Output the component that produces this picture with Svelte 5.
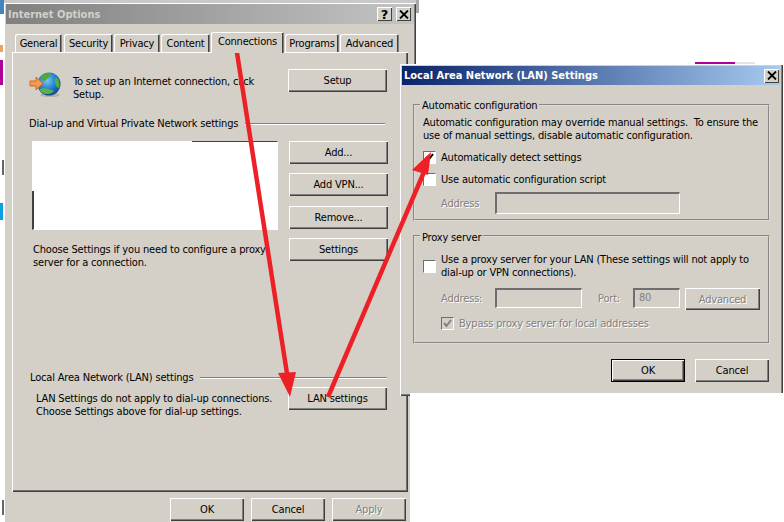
<script>
  const tabs = [
    { label: 'General', w: 47, gap: 2 },
    { label: 'Security', w: 49, gap: 1 },
    { label: 'Privacy', w: 46, gap: 1 },
    { label: 'Content', w: 49, gap: 1 },
    { label: 'Connections', w: 73, gap: 1, sel: true },
    { label: 'Programs', w: 54, gap: 1 },
    { label: 'Advanced', w: 59, gap: 0 }
  ];
</script>

<div class="page">
  <div class="bg-top"></div>
  <div class="bg-corner"></div>
  <div class="strip">
    <i class="s1"></i><i class="s2"></i><i class="s3"></i><i class="s4"></i><i class="s5"></i><i class="s6"></i>
  </div>
  <div class="bg-band"></div>

  <section class="win main">
    <header class="title inactive">
      <span>Internet Options</span>
      <div class="caps">
        <button class="cap q">?</button>
        <button class="cap"><svg width="10" height="9" viewBox="0 0 10 9"><path d="M1 0.5 L9 8.5 M9 0.5 L1 8.5" stroke="#000" stroke-width="1.8" fill="none"/></svg></button>
      </div>
    </header>

    <nav class="tabs">
      {#each tabs as t}
        <div class="tab" class:sel={t.sel} style:width="{t.w}px" style:margin-right="{t.gap}px">{t.label}</div>
      {/each}
    </nav>

    <div class="panel">
      <div class="setup">
        <svg class="globe" width="33" height="26" viewBox="0 0 33 26">
          <defs>
            <radialGradient id="g" cx="0.42" cy="0.35" r="0.7">
              <stop offset="0" stop-color="#7cc4f0"/>
              <stop offset="0.55" stop-color="#1f7fce"/>
              <stop offset="1" stop-color="#123f86"/>
            </radialGradient>
          </defs>
          <ellipse cx="21" cy="23" rx="10" ry="2" fill="#b5b2aa"/>
          <circle cx="20" cy="12" r="11.5" fill="url(#g)"/>
          <path d="M13 3 C16 1 20 1 22 2 C22 5 18 6 16 9 C13 9 12 6 13 3Z" fill="#4fa83a"/>
          <path d="M27 5 C30 7 31 12 30 16 C28 16 26 13 26 10 C26 8 26 6 27 5Z" fill="#58ad3f"/>
          <path d="M11 17 C15 15 20 17 25 19 C23 22 17 23 14 21 C12 20 11 19 11 17Z" fill="#5cb344"/>
          <path d="M1 9 L7 9 L7 5 L14 11.5 L7 18 L7 14 L1 14 Z" fill="#f59a4a" stroke="#d2691e" stroke-width="1"/>
        </svg>
        <p class="setup-text">To set up an Internet connection, click<br />Setup.</p>
        <button class="btn">Setup</button>
      </div>

      <div class="legend dial"><span>Dial-up and Virtual Private Network settings</span><i></i></div>

      <div class="vpn">
        <div class="vpn-left">
          <div class="list"><b class="cover"></b></div>
          <p class="note">Choose Settings if you need to configure a proxy<br />server for a connection.</p>
        </div>
        <div class="vpn-btns">
          <button class="btn">Add...</button>
          <button class="btn">Add VPN...</button>
          <button class="btn rem">Remove...</button>
          <button class="btn">Settings</button>
        </div>
      </div>

      <div class="legend lan"><span>Local Area Network (LAN) settings</span><i></i></div>
      <div class="lanrow">
        <p>LAN Settings do not apply to dial-up connections.<br />Choose Settings above for dial-up settings.</p>
        <button class="btn">LAN settings</button>
      </div>
    </div>

    <footer class="foot">
      <button class="btn wide">OK</button>
      <button class="btn wide">Cancel</button>
      <button class="btn wide off">Apply</button>
    </footer>
  </section>

  <section class="win lanwin">
    <header class="title active">
      <span>Local Area Network (LAN) Settings</span>
      <button class="cap"><svg width="10" height="9" viewBox="0 0 10 9"><path d="M1 0.5 L9 8.5 M9 0.5 L1 8.5" stroke="#000" stroke-width="1.8" fill="none"/></svg></button>
    </header>

    <fieldset class="grp auto">
      <legend>Automatic configuration</legend>
      <p class="desc">Automatic configuration may override manual settings.&nbsp; To ensure the<br />use of manual settings, disable automatic configuration.</p>
      <div class="chk c1">
        <span class="box"><svg width="11" height="11" viewBox="0 0 11 11"><path d="M2 5 L4.5 8 L9 2" stroke="#000" stroke-width="2" fill="none"/></svg></span>
        <label>Automatically detect settings</label>
      </div>
      <div class="chk c2"><span class="box"></span><label>Use automatic configuration script</label></div>
      <div class="addr">
        <span class="off">Address</span>
        <span class="field f-long"></span>
      </div>
    </fieldset>

    <fieldset class="grp proxy">
      <legend>Proxy server</legend>
      <div class="chk c3">
        <span class="box"></span>
        <label>Use a proxy server for your LAN (These settings will not apply to<br />dial-up or VPN connections).</label>
      </div>
      <div class="addr a2">
        <span class="off">Address:</span>
        <span class="field f-mid"></span>
        <span class="off port">Port:</span>
        <span class="field f-port">80</span>
        <button class="btn adv off">Advanced</button>
      </div>
      <div class="chk c4">
        <span class="box dis"><svg width="11" height="11" viewBox="0 0 11 11"><path d="M2 5 L4.5 8 L9 2" stroke="#808080" stroke-width="2" fill="none"/></svg></span>
        <label class="off">Bypass proxy server for local addresses</label>
      </div>
    </fieldset>

    <footer class="foot2">
      <button class="btn wide def">OK</button>
      <button class="btn wide">Cancel</button>
    </footer>
  </section>

  <div class="mask"></div>

  <svg class="arrows" width="784" height="522" viewBox="0 0 784 522">
    <path d="M235 40 L288 380" stroke="#ee2027" stroke-width="4.5" fill="none"/>
    <path d="M278 373 L296 372 L290 397 Z" fill="#ee2027"/>
    <path d="M328 397 L424 172" stroke="#ee2027" stroke-width="4.5" fill="none"/>
    <path d="M431 152 L412 170 L428 175 Z" fill="#ee2027"/>
  </svg>
</div>

<style>
  :global(body) { margin: 0; background: #fff; }
  .page {
    position: relative;
    width: 784px;
    height: 522px;
    overflow: hidden;
    background: #fff;
    font: 11px/13px "DejaVu Sans Condensed", "DejaVu Sans", sans-serif;
    font-stretch: condensed;
    letter-spacing: -0.18px;
    color: #000;
  }
  p { margin: 0; }
  button { font: inherit; font-stretch: inherit; letter-spacing: inherit; color: inherit; padding: 0; border: 0; }

  .bg-top { position: absolute; left: 0; top: 0; width: 416px; height: 4px; background: linear-gradient(90deg, #6d93b0 0 4px, #c9c9c9 4px); }
  .bg-corner { position: absolute; left: 416px; top: 0; width: 3px; height: 13px; background: #a8a8a8; }
  .bg-band { position: absolute; left: 695px; top: 62px; width: 60px; height: 2px; background: linear-gradient(90deg, #b0009a 0 40px, #e4e4e4 40px); }
  .strip { position: absolute; left: 0; top: 0; width: 4px; height: 522px; display: flex; flex-direction: column; }
  .strip i { display: block; }
  .s1 { height: 14px; background: #3f86c0; }
  .s2 { margin-top: 31px; background: #f2a060; width: 3px; height: 7px; }
  .s3 { margin-top: 8px; height: 25px; background: #b0009a; width: 3px; }
  .s4 { margin-top: 75px; height: 15px; width: 2px; margin-left: 2px; background: #666; }
  .s5 { margin-top: 28px; height: 17px; background: #0c9fe0; width: 3px; }
  .s6 { margin-top: 280px; height: 15px; width: 2px; margin-left: 2px; background: #666; }

  .win {
    position: absolute;
    box-sizing: border-box;
    background: #d4d0c8;
    box-shadow: inset 1px 1px #fff, inset -1px -1px #404040, inset -2px -2px #808080;
    display: flex;
    flex-direction: column;
  }
  .main { left: 4px; top: 3px; width: 412px; height: 540px; padding: 1px 2px 0; }
  .lanwin { left: 400px; top: 64px; width: 383px; height: 332px; padding: 2px 3px 0 2px; }

  .title {
    flex: none;
    display: flex;
    align-items: center;
    justify-content: space-between;
    font-weight: 700;
    letter-spacing: 0;
    white-space: nowrap;
    box-sizing: border-box;
  }
  .inactive {
    height: 20px;
    padding: 0 3px 0 2px;
    color: #d4d0c8;
    background: linear-gradient(90deg, #808080, #c4c4c4);
  }
  .active {
    height: 19px;
    padding: 0 1px 0 2px;
    color: #fff;
    background: linear-gradient(90deg, #0a246a, #a6caf0);
  }
  .caps { display: flex; gap: 4px; }
  .cap {
    width: 15px;
    height: 14px;
    display: flex;
    align-items: center;
    justify-content: center;
    color: #000;
    background: #d4d0c8;
    box-shadow: inset 1px 1px #fff, inset -1px -1px #404040;
    font-weight: 700;
    font-size: 13px;
  }
  .cap.q { font-family: "DejaVu Sans", sans-serif; font-stretch: normal; }

  .tabs { flex: none; display: flex; align-items: flex-end; height: 28px; margin-left: 9px; }
  .tab {
    box-sizing: border-box;
    height: 18px;
    text-align: center;
    line-height: 19px;
    white-space: nowrap;
    box-shadow: inset 1px 1px #fff, inset -1px 0 #808080, inset -2px 0 #404040;
    border-radius: 2px 2px 0 0;
  }
  .tab.sel {
    height: 21px;
    margin-bottom: -1px;
    line-height: 20px;
    position: relative;
    z-index: 1;
    background: #d4d0c8;
  }

  .panel {
    flex: none;
    box-sizing: border-box;
    width: 396px;
    height: 440px;
    margin-left: 6px;
    padding: 17px 21px 0 17px;
    box-shadow: inset 1px 1px #fff, inset -1px -1px #404040, inset -2px -2px #707070;
  }

  .btn {
    display: block;
    box-sizing: border-box;
    width: 99px;
    height: 23px;
    background: #d4d0c8;
    text-align: center;
    box-shadow: inset 1px 1px #fff, inset -1px -1px #404040, inset -2px -2px #808080;
    white-space: nowrap;
  }
  .wide { width: 74px; }
  .off { color: #808080; text-shadow: 1px 1px #fff; }

  .setup { display: flex; align-items: flex-start; height: 26px; }
  .globe { flex: none; margin-top: 3px; }
  .setup-text { width: 215px; margin: 6px 0 0 11px; white-space: nowrap; }
  .setup .btn { margin-left: auto; }

  .legend { display: flex; align-items: center; height: 13px; white-space: nowrap; }
  .legend i { flex: 1; height: 2px; background: linear-gradient(#808080 50%, #fff 50%); margin-left: 7px; }
  .dial { margin-top: 22px; margin-right: 2px; }

  .vpn { display: flex; margin-top: 11px; justify-content: space-between; height: 120px; margin-right: -1px; }
  .vpn-left { margin-left: 3px; width: 246px; }
  .list {
    position: relative;
    box-sizing: border-box;
    width: 246px;
    height: 89px;
    background: #fff;
    border: 1px solid;
    border-color: #404040 #fff #fff #404040;
    border-left-width: 2px;
  }
  .cover { position: absolute; left: -2px; top: -1px; width: 160px; height: 50px; background: #fff; }
  .note { margin-top: 13px; width: 246px; padding-left: 1px; white-space: nowrap; }
  .vpn-btns { display: flex; flex-direction: column; gap: 9px; }
  .rem { margin-top: 1px; }

  .lan { margin-top: 110px; margin-left: 1px; }
  .lanrow { display: flex; justify-content: space-between; margin-top: 3px; }
  .lanrow p { margin: 5px 0 0 7px; white-space: nowrap; }

  .foot { display: flex; gap: 7px; margin: 6px 0 0 164px; }

  .grp {
    box-sizing: border-box;
    margin: 0 0 0 11px;
    width: 357px;
    padding: 0 0 0 8px;
    border: 2px groove #dedbd4;
    min-width: 0;
  }
  .grp legend { padding: 0 2px; margin-left: -3px; line-height: 13px; white-space: nowrap; position: relative; top: 1px; }
  .proxy legend { top: 2px; }
  .auto { height: 123px; margin-top: 13px; }
  .proxy { height: 115px; margin-top: 8px; }

  .desc { margin-top: 5px; white-space: nowrap; }
  .chk { display: flex; align-items: flex-start; }
  .box {
    flex: none;
    box-sizing: border-box;
    width: 13px;
    height: 13px;
    background: #fff;
    border: 1px solid;
    border-color: #6e6e6e #fff #fff #6e6e6e;
    display: flex;
    align-items: center;
    justify-content: center;
    overflow: hidden;
  }
  .box.dis { background: #d4d0c8; }
  .chk label { margin-left: 5px; white-space: nowrap; }
  .c1 { margin-top: 9px; }
  .c2 { margin-top: 9px; }
  .c3 { margin-top: 11px; align-items: center; }
  .c4 { margin: 7px 0 0 18px; }
  .addr { display: flex; align-items: center; margin: 6px 0 0 18px; }
  .addr > span:first-child { width: 54px; flex: none; }
  .field {
    display: block;
    box-sizing: border-box;
    height: 22px;
    border: 1px solid;
    border-color: #6e6e6e #fff #fff #6e6e6e;
    border-width: 2px 1px 1px 2px;
  }
  .f-long { width: 185px; }
  .a2 { margin-top: 7px; }
  .a2 .field { height: 20px; }
  .f-mid { width: 87px; }
  .port { margin-left: 16px; width: 35px; }
  .f-port { width: 47px; color: #808080; padding-left: 4px; line-height: 16px; }
  .adv { width: 75px; height: 22px; margin-left: 5px; margin-top: 2px; }

  .foot2 { display: flex; gap: 10px; margin: 15px 0 0 209px; }
  .def { outline: 1px solid #000; outline-offset: -1px; box-shadow: inset 2px 2px #fff, inset -2px -2px #404040, inset -3px -3px #808080; }

  .mask { position: absolute; left: 410px; top: 393px; right: 0; bottom: 0; background: #fff; }
  .arrows { position: absolute; left: 0; top: 0; pointer-events: none; }
</style>
